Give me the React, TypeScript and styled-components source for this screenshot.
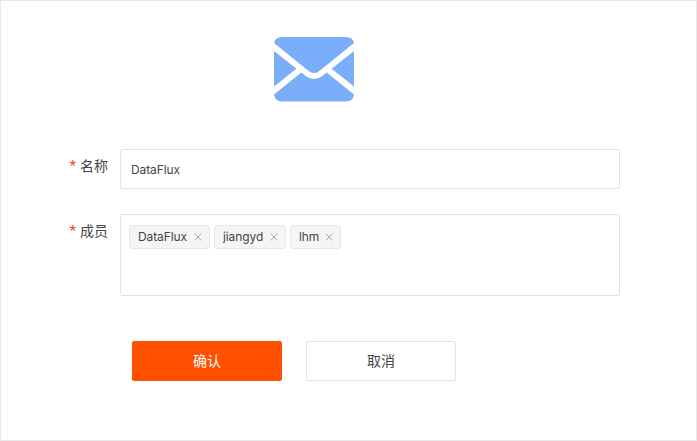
import React from "react";
import styled, { createGlobalStyle } from "styled-components";

const GlobalStyle = createGlobalStyle`
  *, *::before, *::after { box-sizing: border-box; }
  body { margin: 0; background: #fff; }
`;

const Panel = styled.main`
  width: 697px;
  height: 441px;
  border: 1px solid #e8e8e8;
  background: #fff;
  color: #444;
  font-family: Inter, "Noto Sans CJK SC", sans-serif;
  font-size: 12px;
  letter-spacing: -0.1px;
`;

const Mail = styled.svg`
  display: block;
  width: 80px;
  height: 65px;
  margin: 36px 0 47px 273px;
`;

const Form = styled.form`
  display: flex;
  flex-direction: column;
  gap: 25px;
  width: 619px;
`;

const Row = styled.div`
  display: flex;
  align-items: flex-start;
`;

const Label = styled.label`
  display: flex;
  justify-content: flex-end;
  gap: 4px;
  width: 119px;
  padding: 7px 12px 0 0;
  font-size: 14px;
  line-height: 20px;
  letter-spacing: 0;
  color: #444;
`;

const Required = styled.span`
  padding-top: 1px;
  font-family: "Liberation Sans", sans-serif;
  font-size: 17px;
  color: #ff3a1c;
`;

const TextInput = styled.input`
  flex: 1;
  height: 40px;
  padding: 0 10px;
  border: 1px solid #e1e1e1;
  border-radius: 2px;
  outline: 0;
  color: #444;
  background: #fff;
  font: inherit;
  letter-spacing: inherit;
`;

const TagField = styled.div`
  display: flex;
  flex: 1;
  align-items: flex-start;
  gap: 4px;
  height: 82px;
  padding: 10px 8px;
  border: 1px solid #e1e1e4;
  border-radius: 2px;
`;

const Tag = styled.span<{ $width: number }>`
  display: flex;
  align-items: center;
  justify-content: space-between;
  width: ${(p) => p.$width}px;
  height: 24px;
  padding: 0 7px 0 8px;
  border: 1px solid #e8e8e8;
  border-radius: 3px;
  background: #f5f5f5;
  line-height: 22px;
`;

const Close = styled.svg`
  width: 8px;
  height: 8px;
  stroke: #aaa;
  stroke-width: 1;
`;

const Actions = styled.div`
  display: flex;
  gap: 24px;
  padding: 20px 0 0 131px;
`;

const Button = styled.button<{ $primary?: boolean }>`
  width: 150px;
  height: 40px;
  padding: 0 0 2px;
  border: 1px solid ${(p) => (p.$primary ? "#ff5000" : "#dfe1e8")};
  border-radius: 2px;
  background: ${(p) => (p.$primary ? "#ff5000" : "#fff")};
  color: ${(p) => (p.$primary ? "#fff" : "#444")};
  font-family: inherit;
  font-size: 14px;
`;

const members = [
  { name: "DataFlux", width: 81 },
  { name: "jiangyd", width: 72 },
  { name: "lhm", width: 51 },
];

export default function App() {
  return (
    <Panel>
      <GlobalStyle />
      <Mail viewBox="0 0 80 65" fill="#7aaefa" aria-hidden="true">
        <path d="M0 6Q1 0 8 0H72Q79 0 80 6L46 33.4Q40 38.6 34 33.4Z" />
        <path d="M0 14L22.4 31.8L0 49.6Z" />
        <path d="M80 14L57.6 31.8L80 49.6Z" />
        <path d="M0 57.6L27.3 35.4L32 39.2Q40 45 48 39.2L52.7 35.4L80 57.6Q79 64.5 72 64.5H8Q1 64.5 0 57.6Z" />
      </Mail>
      <Form onSubmit={(e) => e.preventDefault()}>
        <Row>
          <Label htmlFor="name"><Required>*</Required>名称</Label>
          <TextInput id="name" defaultValue="DataFlux" />
        </Row>
        <Row>
          <Label><Required>*</Required>成员</Label>
          <TagField>
            {members.map((m) => (
              <Tag key={m.name} $width={m.width}>
                {m.name}
                <Close viewBox="0 0 8 8"><path d="M.5.5l7 7M7.5.5l-7 7" /></Close>
              </Tag>
            ))}
          </TagField>
        </Row>
        <Actions>
          <Button $primary>确认</Button>
          <Button type="button">取消</Button>
        </Actions>
      </Form>
    </Panel>
  );
}
